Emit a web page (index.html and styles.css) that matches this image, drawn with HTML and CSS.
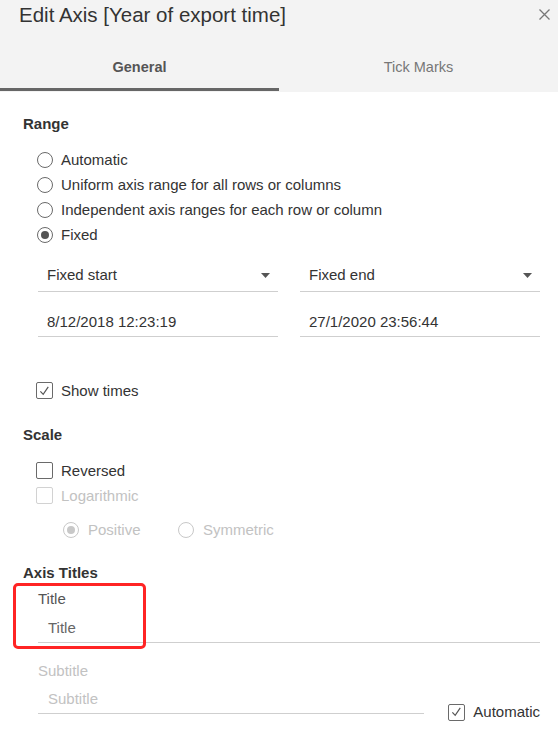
FILE: index.html
```html
<!DOCTYPE html>
<html>
<head>
<meta charset="utf-8">
<link rel="stylesheet" href="styles.css">
</head>
<body>
<div class="dialog">
  <header class="header">
    <div class="title-row">
      <h1 class="title">Edit Axis [Year of export time]</h1>
      <svg class="close" width="11" height="11" viewBox="0 0 11 11"><path d="M0.5 0.5 L10.5 10.5 M10.5 0.5 L0.5 10.5" stroke="#777" stroke-width="1.3" fill="none"/></svg>
    </div>
    <div class="tabs">
      <div class="tab active">General</div>
      <div class="tab">Tick Marks</div>
    </div>
  </header>

  <main class="main">
    <div class="section-title first">Range</div>
    <div class="option-list">
      <label class="row"><span class="radio"></span><span>Automatic</span></label>
      <label class="row"><span class="radio"></span><span>Uniform axis range for all rows or columns</span></label>
      <label class="row"><span class="radio"></span><span>Independent axis ranges for each row or column</span></label>
      <label class="row"><span class="radio checked"></span><span>Fixed</span></label>
    </div>

    <div class="range-grid">
      <div class="select"><span>Fixed start</span><svg width="9" height="5" viewBox="0 0 9 5"><path d="M0 0 H9 L4.5 5 Z" fill="#555"/></svg></div>
      <div class="select"><span>Fixed end</span><svg width="9" height="5" viewBox="0 0 9 5"><path d="M0 0 H9 L4.5 5 Z" fill="#555"/></svg></div>
      <div class="date">8/12/2018 12:23:19</div>
      <div class="date">27/1/2020 23:56:44</div>
    </div>

    <label class="row check-row show-times"><span class="checkbox"><svg width="16" height="16" viewBox="0 0 16 16"><path d="M3.6 8.4 L6.6 11.6 L12 3.6" stroke="#555" stroke-width="1.3" fill="none"/></svg></span><span>Show times</span></label>

    <div class="section-title scale">Scale</div>
    <div class="option-list tight">
      <label class="row check-row"><span class="checkbox"></span><span>Reversed</span></label>
      <label class="row check-row disabled"><span class="checkbox"></span><span>Logarithmic</span></label>
    </div>
    <div class="row sub-options disabled">
      <label class="sub-option first-sub"><span class="radio checked"></span><span>Positive</span></label>
      <label class="sub-option"><span class="radio"></span><span>Symmetric</span></label>
    </div>

    <div class="section-title axis">Axis Titles</div>
    <div class="title-block">
      <div class="field-label">Title</div>
      <div class="field-input">Title</div>
      <div class="annotation"></div>
    </div>
    <div class="field-label subtitle-label disabled">Subtitle</div>
    <div class="subtitle-row">
      <div class="field-input placeholder">Subtitle</div>
      <label class="auto"><span class="checkbox"><svg width="16" height="16" viewBox="0 0 16 16"><path d="M3.6 8.4 L6.6 11.6 L12 3.6" stroke="#555" stroke-width="1.3" fill="none"/></svg></span><span>Automatic</span></label>
    </div>
  </main>
</div>
</body>
</html>
```

FILE: styles.css
```css
* { box-sizing: border-box; }

html, body {
  margin: 0;
  padding: 0;
  background: #fff;
}

body {
  font-family: "Liberation Sans", Arial, sans-serif;
  font-size: 15px;
  color: #333;
}

.dialog {
  width: 558px;
  height: 742px;
  overflow: hidden;
}

.header {
  background: #f3f3f3;
  padding-bottom: 1px;
}

.title-row {
  display: flex;
  align-items: center;
  justify-content: space-between;
  height: 30px;
  padding: 0 8px 0 19px;
}

.title {
  margin: 0;
  font-size: 20.5px;
  font-weight: normal;
  line-height: 30px;
  color: #333;
}

.close {
  display: block;
  margin-top: -1px;
}

.tabs {
  display: flex;
}

.tab {
  flex: 1;
  text-align: center;
  font-size: 14.5px;
  line-height: 18px;
  padding: 28px 0 12px;
  border-bottom: 3px solid transparent;
  color: #777;
}

.tab.active {
  font-weight: bold;
  color: #555;
  border-bottom-color: #666;
}

.main {
  padding: 0 18px 0 23px;
}

.section-title {
  font-weight: bold;
  font-size: 15px;
  line-height: 18px;
  color: #333;
}

.section-title.first { margin-top: 23px; }
.section-title.scale { margin-top: 23px; }
.section-title.axis { margin-top: 22px; }

.option-list {
  margin-top: 14px;
}

.row {
  display: flex;
  align-items: center;
  height: 25px;
  padding-left: 14px;
  gap: 8px;
  line-height: 18px;
}

.row.check-row {
  padding-left: 13px;
}

.row.disabled,
.disabled {
  color: #c2c2c2;
}

.radio {
  width: 16px;
  height: 16px;
  border: 1px solid #6a6a6a;
  border-radius: 50%;
  background: #fff;
  display: flex;
  align-items: center;
  justify-content: center;
  flex: none;
}

.radio.checked::after {
  content: "";
  width: 8px;
  height: 8px;
  border-radius: 50%;
  background: #555;
}

.disabled .radio {
  border-color: #c8c8c8;
}

.disabled .radio.checked::after {
  background: #c8c8c8;
}

.checkbox {
  width: 17px;
  height: 17px;
  border: 1px solid #6a6a6a;
  border-radius: 2px;
  background: #fff;
  flex: none;
  display: flex;
  align-items: center;
  justify-content: center;
}

.checkbox svg { display: block; }

.disabled .checkbox {
  border-color: #d2d2d2;
}

.range-grid {
  margin-left: 15px;
  display: grid;
  grid-template-columns: 1fr 1fr;
  column-gap: 22px;
  margin-top: 9px;
}

.select {
  display: flex;
  align-items: center;
  justify-content: space-between;
  padding: 10px 8px 7px 9px;
  line-height: 18px;
  border-bottom: 1px solid #cfcfcf;
}

.select svg { display: block; margin-top: 1px; }

.date {
  padding: 21px 9px 5px;
  line-height: 18px;
  border-bottom: 1px solid #cfcfcf;
}

.show-times {
  margin-top: 41px;
}

.option-list.tight {
  margin-top: 14px;
}

.sub-options {
  margin-top: 9px;
  padding-left: 40px;
  gap: 0;
}

.sub-option {
  display: flex;
  align-items: center;
  gap: 9px;
}

.sub-option.first-sub {
  width: 115px;
}

.title-block {
  position: relative;
  margin-left: 15px;
}

.field-label {
  line-height: 18px;
  color: #555;
  padding-top: 8px;
}

.field-input {
  padding: 11px 10px 5px;
  line-height: 18px;
  color: #666;
  border-bottom: 1px solid #cfcfcf;
}

.annotation {
  position: absolute;
  left: -25px;
  top: 1px;
  width: 133px;
  height: 66px;
  border: 3px solid #ff2424;
  border-radius: 5px;
}

.subtitle-label {
  margin-left: 15px;
  padding-top: 0;
  margin-top: 19px;
  color: #c2c2c2;
}

.subtitle-row {
  display: flex;
  align-items: flex-end;
  margin-left: 15px;
}

.subtitle-row .field-input {
  width: 386px;
  padding-top: 10px;
}

.placeholder {
  color: #c2c2c2;
}

.auto {
  margin-left: auto;
  margin-bottom: -7px;
  display: flex;
  align-items: center;
  gap: 8px;
  line-height: 18px;
}
```
